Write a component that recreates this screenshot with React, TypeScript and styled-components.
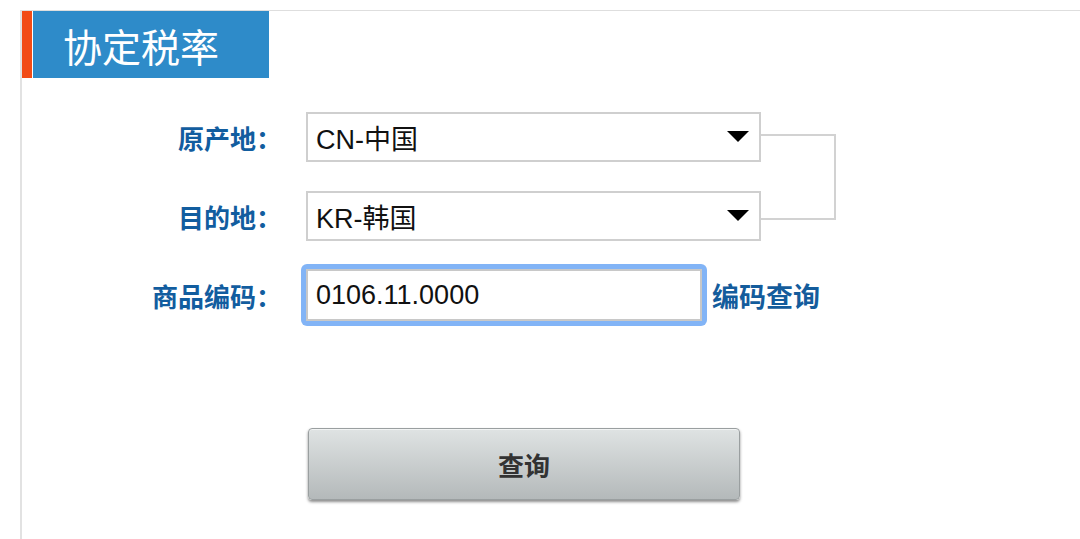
import styled, { createGlobalStyle } from "styled-components";

const GlobalStyle = createGlobalStyle`
	html, body {
		margin: 0;
		padding: 0;
		background: #ffffff;
	}
	body {
		font-family: "Liberation Sans", "Noto Sans CJK SC", sans-serif;
	}
`;

const Panel = styled.section`
	margin: 10px 0 0 20px;
	min-height: 529px;
	box-sizing: border-box;
	border-top: 1px solid #dedede;
	border-left: 2px solid #e2e2e2;
`;

const Header = styled.div`
	display: flex;
	height: 67px;
`;

const Accent = styled.div`
	width: 10px;
	margin-right: 1px;
	background: #f24b16;
`;

const TitleBox = styled.h1`
	margin: 0;
	width: 236px;
	box-sizing: border-box;
	padding-left: 30px;
	display: flex;
	align-items: center;
	background: #2e8bc9;
	color: #ffffff;
	font-family: "Noto Sans CJK SC", sans-serif;
	font-size: 39px;
	font-weight: 400;
`;

const Form = styled.div`
	padding-top: 34px;
	display: flex;
	flex-direction: column;
`;

const PairGroup = styled.div`
	display: flex;
	align-items: center;
`;

const PairRows = styled.div`
	display: flex;
	flex-direction: column;
	gap: 29px;
`;

const Bracket = styled.div`
	width: 73px;
	height: 82px;
	border: 2px solid #d2d2d2;
	border-left: none;
`;

const Row = styled.div<{ $top?: number }>`
	display: flex;
	align-items: center;
	margin-top: ${(p) => p.$top ?? 0}px;
`;

const Label = styled.label`
	width: 284px;
	padding-right: 24px;
	box-sizing: border-box;
	text-align: right;
	color: #125d9f;
	font-family: "Noto Sans CJK SC", sans-serif;
	font-size: 26px;
	font-weight: 700;
	white-space: nowrap;
`;

const SelectBox = styled.div`
	width: 455px;
	height: 50px;
	box-sizing: border-box;
	border: 2px solid #cfcfcf;
	background: #ffffff;
	display: flex;
	align-items: center;
	justify-content: space-between;
	padding: 0 10px 0 8px;
	font-size: 27px;
	color: #111111;
`;

const FocusRing = styled.div`
	margin-left: -5px;
	padding: 5px;
	border-radius: 6px;
	background: #82b4f6;
	display: flex;
`;

const CodeInput = styled.input`
	width: 396px;
	height: 52px;
	box-sizing: border-box;
	border: 2px solid #c8c8c8;
	outline: none;
	margin: 0;
	padding: 0 8px;
	font-family: "Liberation Sans", "Noto Sans CJK SC", sans-serif;
	font-size: 27px;
	color: #111111;
	background: #ffffff;
`;

const LookupLink = styled.a`
	margin-left: 5px;
	color: #145c9c;
	font-family: "Noto Sans CJK SC", sans-serif;
	font-size: 27px;
	font-weight: 700;
	text-decoration: none;
	white-space: nowrap;
`;

const ButtonRow = styled.div`
	margin-top: 102px;
	padding-left: 286px;
`;

const QueryButton = styled.button`
	width: 432px;
	height: 72px;
	border: 1px solid #9a9fa0;
	border-radius: 4px;
	background: linear-gradient(#dfe3e3, #b4b9ba);
	box-shadow: 0 2px 3px rgba(0, 0, 0, 0.45), inset 0 1px 0 rgba(255, 255, 255, 0.6);
	color: #333333;
	font-family: "Noto Sans CJK SC", sans-serif;
	font-size: 26px;
	font-weight: 700;
	cursor: pointer;
`;

const Caret = () => (
	<svg width="22" height="12" viewBox="0 0 22 12">
		<polygon points="0,0 22,0 11,11" fill="#000" />
	</svg>
);

const Select = ({ value }: { value: string }) => (
	<SelectBox>
		<span>{value}</span>
		<Caret />
	</SelectBox>
);

const App: React.FC = () => {
	return (
		<>
			<GlobalStyle />
			<Panel>
				<Header>
					<Accent />
					<TitleBox>协定税率</TitleBox>
				</Header>
				<Form>
					<PairGroup>
						<PairRows>
							<Row>
								<Label>原产地：</Label>
								<Select value="CN-中国" />
							</Row>
							<Row>
								<Label>目的地：</Label>
								<Select value="KR-韩国" />
							</Row>
						</PairRows>
						<Bracket />
					</PairGroup>
					<Row $top={23}>
						<Label>商品编码：</Label>
						<FocusRing>
							<CodeInput defaultValue="0106.11.0000" />
						</FocusRing>
						<LookupLink href="#">编码查询</LookupLink>
					</Row>
					<ButtonRow>
						<QueryButton>查询</QueryButton>
					</ButtonRow>
				</Form>
			</Panel>
		</>
	);
};

export default App;
